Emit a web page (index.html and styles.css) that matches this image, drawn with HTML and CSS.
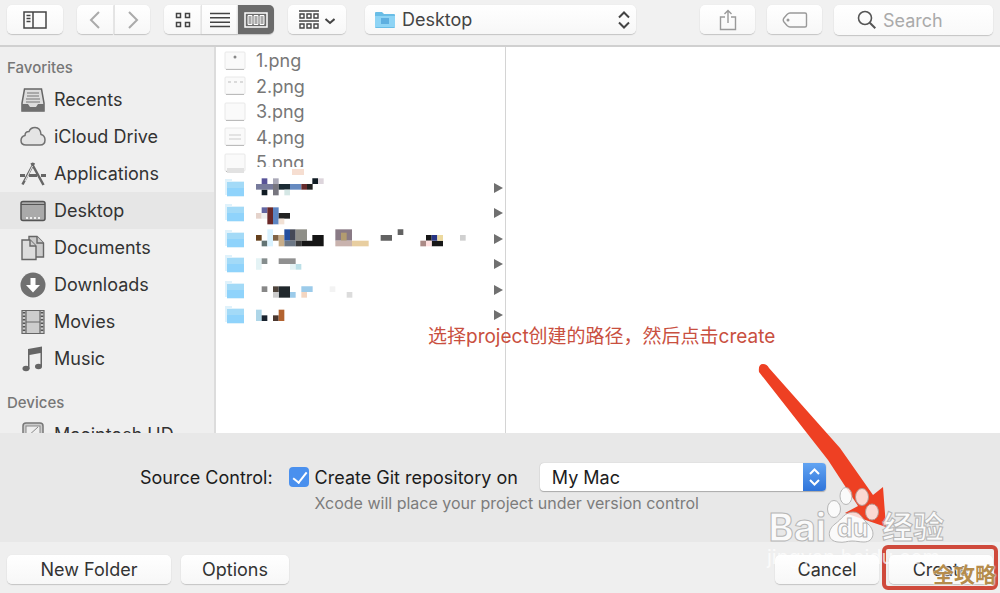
FILE: index.html
```html
<!DOCTYPE html>
<html lang="en">
<head>
  <meta charset="UTF-8" />
  <meta name="viewport" content="width=device-width, initial-scale=1.0"/>
  <title>Save Project</title>
  <link rel="stylesheet" href="styles.css">
</head>
<body>
  <div class="dialog">
    <header class="toolbar">
      <button class="btn w56" aria-label="Toggle sidebar">
        <svg width="24" height="18" viewBox="0 0 24 18" fill="none" stroke="#444" stroke-width="1.5"><path d="M1 1h22v16H1zM10 1v16M3.500 4.500h4M3.500 7.500h4M3.500 10.500h4"/></svg>
      </button>

      <div class="group nav">
        <button class="btn w36" aria-label="Back"><svg width="12" height="18" viewBox="0 0 12 18" fill="none" stroke="#aaa" stroke-width="2"><path d="M10 1L2 9l8 8"/></svg></button>
        <button class="btn w36" aria-label="Forward"><svg width="12" height="18" viewBox="0 0 12 18" fill="none" stroke="#aaa" stroke-width="2"><path d="M2 1l8 8-8 8"/></svg></button>
      </div>

      <div class="group">
        <button class="btn w37" aria-label="Icons"><svg width="16" height="16" viewBox="0 0 16 16" fill="none" stroke="#444" stroke-width="1.5"><path d="M1.500 1.500h4v4h-4zM10.500 1.500h4v4h-4zM1.500 10.500h4v4h-4zM10.500 10.500h4v4h-4z"/></svg></button>
        <button class="btn w36" aria-label="List"><svg width="20" height="16" viewBox="0 0 20 16" fill="none" stroke="#444" stroke-width="1.500"><path d="M0 1.500h20M0 5.800h20M0 10.200h20M0 14.500h20"/></svg></button>
        <button class="btn w37 active" aria-label="Columns"><svg width="24" height="16" viewBox="0 0 24 16" fill="none" stroke="#fff" stroke-width="1.500"><path d="M1 1h22v14H1z"/><path fill="#aaa" d="M4 3.500h4v9H4zM10 3.500h4v9h-4zM16 3.500h4v9h-4z" stroke-width="1"/></svg></button>
      </div>

      <button class="btn w58" aria-label="Group by">
        <svg width="36" height="20" viewBox="0 0 36 20" fill="none" stroke="#444" stroke-width="1.400"><path d="M0 1h20M0 11h20M1 4h4v4H1zM8 4h4v4H8zM15 4h4v4h-4zM1 14h4v4H1zM8 14h4v4H8zM15 14h4v4h-4z"/><path stroke-width="2" d="M26.500 9l4.500 4 4.500-4"/></svg>
      </button>

      <div class="location">
        <svg class="location-icon" width="22" height="18" viewBox="0 0 22 18"><path fill="#69bde6" d="M1 2q0-1 1-1h6l2 2h10q1 0 1 1v12q0 1-1 1H2q-1 0-1-1z"/><path fill="#8ed4f5" d="M1 5h20v11H1z"/><path fill="#5eafe0" d="M7 7h8v6H7z"/></svg>
        <select aria-label="Location"><option>Desktop</option></select>
        <svg class="location-arrows" width="12" height="18" viewBox="0 0 12 18" fill="none" stroke="#444" stroke-width="2"><path d="M1 6.500L6 1.500l5 5M1 11.500l5 5 5-5"/></svg>
      </div>

      <div class="toolbar-end">
        <button class="btn w55" aria-label="Share"><svg width="18" height="22" viewBox="0 0 18 22" fill="none" stroke="#999" stroke-width="1.400"><path d="M6 8H1.500v12.500h15V8H12M9 14V1.500M5.500 5L9 1.500 12.500 5"/></svg></button>
        <button class="btn w55" aria-label="Tags"><svg width="26" height="16" viewBox="0 0 26 16" fill="none" stroke="#999" stroke-width="1.400"><path d="M8 1h15q1.500 0 1.500 1.500v11q0 1.500-1.500 1.500H8q-1.500 0-3-1.500L2 10q-1.500-2 0-4l3-3.500Q6.500 1 8 1z"/><circle cx="6" cy="8" r=".8"/></svg></button>
        <div class="search">
          <svg width="20" height="20" viewBox="0 0 20 20" fill="none" stroke="#555" stroke-width="1.600"><circle cx="8" cy="8" r="6.500"/><path stroke-width="2" d="M12.800 12.800l5.500 5.500"/></svg>
          <input type="search" placeholder="Search" aria-label="Search">
        </div>
      </div>
    </header>

    <main class="browser">
      <nav class="sidebar">
        <h2>Favorites</h2>
        <a href="#"><svg viewBox="0 0 26 26"><path fill="#ddd" stroke="#666" stroke-width="1.500" d="M4.500 2h17L24 16v8H2v-8z"/><path stroke="#777" stroke-width="1.200" d="M7 6h12M7 9h12M6 12h14M6 15h14"/><path fill="#707070" d="M2 17h6l2 3h6l2-3h6v7H2z"/></svg>Recents</a>
        <a href="#"><svg viewBox="0 0 26 26"><path fill="#e4e4e4" stroke="#707070" stroke-width="1.500" d="M6 21q-5 0-5-4.500 0-4 4-5 0-4 4-4 1.500-4 6-4 5.500 0 6 7 4 1 4 5.500 0 5-5 5z"/></svg>iCloud Drive</a>
        <a href="#"><svg viewBox="0 0 26 26" fill="none" stroke="#666"><path stroke-width="2.500" d="M14 2L2.500 23.500M11.500 2l12 22"/><path stroke-width="3" d="M0 14.500h5M9 14.500h8M21 14.500h5"/><path stroke="#efefef" stroke-width="1" d="M12.500 5L5 20"/></svg>Applications</a>
        <a href="#" class="selected"><svg viewBox="0 0 26 26"><rect x="1" y="3.500" width="24" height="19" rx="2" fill="#aaa" stroke="#555" stroke-width="1.500"/><path stroke="#555" d="M1 6.500h24"/><path stroke="#eee" stroke-width="2" stroke-dasharray="2 2" d="M6 20h15"/></svg>Desktop</a>
        <a href="#"><svg viewBox="0 0 26 26" fill="#ccc" stroke="#666" stroke-width="1.400"><path d="M9 1.500h8l6.500 6.500v14H9z"/><path d="M17 1.500V8h6.500"/><path fill="#ddd" d="M2 5h8l6 6v13.500H2z"/><path d="M10 5v6h6"/></svg>Documents</a>
        <a href="#"><svg viewBox="0 0 26 26"><circle cx="13" cy="13" r="12.500" fill="#707070"/><path fill="#fff" d="M10.500 6h5v7H20l-7 7.500L6 13h4.500z"/></svg>Downloads</a>
        <a href="#"><svg viewBox="0 0 26 26"><path fill="#ccc" stroke="#666" stroke-width="1.200" d="M2 1.500h22v23H2zM6 1.500v23M20 1.500v23M6 13h14"/><path stroke="#555" stroke-width="2.500" stroke-dasharray="1.500 2" d="M4 3v21M22 3v21"/></svg>Movies</a>
        <a href="#"><svg viewBox="0 0 26 26"><g fill="#666"><path d="M8 3l14-2.500v20h-1.500V7L9.500 9v14H8z"/><ellipse cx="6" cy="22.500" rx="3.500" ry="2.800"/><ellipse cx="18.500" cy="20.500" rx="3.500" ry="2.800"/></g></svg>Music</a>
        <h2 class="devices">Devices</h2>
        <a href="#"><svg viewBox="0 0 26 26"><rect x="3" y="1" width="20" height="24" rx="3" fill="#ccc" stroke="#777" stroke-width="1.500"/><rect x="6" y="4" width="14" height="12" fill="#eee" stroke="#888"/><path stroke="#888" d="M7 15L18 5"/></svg>Macintosh HD</a>
      </nav>

      <ul class="files">
        <li><svg class="thumb" viewBox="0 0 22 22"><use href="#shot"/><circle cx="11" cy="7" r="1.500" fill="#888"/></svg><span>1.png</span></li>
        <li><svg class="thumb" viewBox="0 0 22 22"><use href="#shot"/><path stroke="#bbb" d="M4 7h3M10 7h3M16 7h3"/></svg><span>2.png</span></li>
        <li><svg class="thumb" viewBox="0 0 22 22"><use href="#shot"/></svg><span>3.png</span></li>
        <li><svg class="thumb" viewBox="0 0 22 22"><use href="#shot"/><path stroke="#ccc" d="M5 9h12M5 13h12"/></svg><span>4.png</span></li>
        <li><svg class="thumb" viewBox="0 0 22 22"><use href="#shot"/><path fill="#e2e2e2" d="M3 16h17v5H3z"/></svg><span class="cut">5.png</span>
          <svg class="smudge" width="12" height="6"><path fill="#f6ded1" d="M0 0h12v6H0z"/></svg></li>
        <li>
          <svg class="thumb" viewBox="0 0 22 22"><use href="#folder"/></svg>
          <svg class="mosaic" viewBox="0 0 690 75"><path fill="#777b9c" d="M0 27h51v17H0z"/><path fill="#585398" d="M17 10h17v17H17z"/><path fill="#111c24" d="M17 44h17v17H17zM169 10h17v17h-17z"/><path fill="#aaa9b8" d="M51 10h17v17H51z"/><path fill="#77767f" d="M51 27h17v34H51z"/><path fill="#1b2b35" d="M68 27h34v17H68z"/><path fill="#668ac0" d="M102 27h34v17h-34z"/><path fill="#662b2c" d="M136 27h17v17h-17z"/><path fill="#222" d="M153 27h17v17h-17z"/><path fill="#ddd5dc" d="M186 10h17v17h-17z"/><path fill="#d5e7e5" d="M85 44h17v17H85z"/></svg>
          <i class="more"></i>
        </li>
        <li>
          <svg class="thumb" viewBox="0 0 22 22"><use href="#folder"/></svg>
          <svg class="mosaic" viewBox="0 0 690 75"><path fill="#e5d3cb" d="M0 36h17v17H0z"/><path fill="#6265a0" d="M17 19h17v17H17z"/><path fill="#eee" d="M17 36h17v17H17z"/><path fill="#6a2828" d="M34 19h17v51H34z"/><path fill="#5d85c2" d="M51 19h17v51H51z"/><path fill="#222" d="M68 36h34v17H68z"/><path fill="#f1e1d5" d="M68 53h17v17H68z"/></svg>
          <i class="more"></i>
        </li>
        <li>
          <svg class="thumb" viewBox="0 0 22 22"><use href="#folder"/></svg>
          <svg class="mosaic" viewBox="0 0 690 75"><path fill="#65401c" d="M0 27h17v17H0z"/><path fill="#637474" d="M17 44h17v17H17z"/><path fill="#d9f2ff" d="M34 10h17v51H34z"/><path fill="#806346" d="M51 27h17v17H51z"/><path fill="#c8ad88" d="M68 27h17v34H68z"/><path fill="#234e9e" d="M85 10h17v34H85z"/><path fill="#464a57" d="M102 10h17v34h-17z"/><path fill="#8f8f88" d="M119 10h34v34h-34z"/><path fill="#6c7785" d="M85 44h34v17H85z"/><path fill="#3b3b3b" d="M119 44h17v17h-17z"/><path fill="#151515" d="M136 44h67v17h-67zM169 27h34v17h-34z"/><path fill="#897a85" d="M238 10h50v34h-50z"/><path fill="#b29c70" d="M255 20h17v24h-17z"/><path fill="#c9b3ae" d="M238 44h50v17h-50z"/><path fill="#e8cea0" d="M288 44h50v17h-50z"/><path fill="#626262" d="M374 27h34v17h-34zM425 10h17v17h-17z"/><path fill="#ab8a86" d="M493 44h17v17h-17z"/><path fill="#171717" d="M510 27h17v17h-17zM527 44h34v17h-34z"/><path fill="#273585" d="M527 27h17v17h-17z"/><path fill="#ecd99f" d="M544 27h17v17h-17z"/><path fill="#ffe0e0" d="M510 44h17v17h-17z"/><path fill="#d0d0d0" d="M612 27h17v17h-17z"/></svg>
          <i class="more"></i>
        </li>
        <li>
          <svg class="thumb" viewBox="0 0 22 22"><use href="#folder"/></svg>
          <svg class="mosaic" viewBox="0 0 690 75"><path fill="#e4f3f5" d="M0 19h17v34H0zM102 36h17v17h-17z"/><path fill="#858d8d" d="M17 19h17v17H17z"/><path fill="#909090" d="M68 19h51v17H68z"/><path fill="#bce0e8" d="M119 36h17v17h-17z"/></svg>
          <i class="more"></i>
        </li>
        <li>
          <svg class="thumb" viewBox="0 0 22 22"><use href="#folder"/></svg>
          <svg class="mosaic" viewBox="0 0 690 75"><path fill="#888" d="M17 28h17v17H17z"/><path fill="#4f443b" d="M51 28h17v17H51z"/><path fill="#20272b" d="M68 28h34v34H68z"/><path fill="#9ccbea" d="M102 45h17v17h-17zM136 28h34v17h-34z"/><path fill="#ccc" d="M51 45h17v17H51z"/><path fill="#f4d6c1" d="M136 45h17v17h-17z"/><path fill="#f3f3f3" d="M221 28h17v17h-17z"/><path fill="#dcdcdc" d="M272 45h17v17h-17z"/></svg>
          <i class="more"></i>
        </li>
        <li>
          <svg class="thumb" viewBox="0 0 22 22"><use href="#folder"/></svg>
          <svg class="mosaic" viewBox="0 0 690 75"><path fill="#aed6e8" d="M0 20h17v34H0z"/><path fill="#19222e" d="M17 37h17v17H17z"/><path fill="#4b3830" d="M51 37h17v17H51z"/><path fill="#b36330" d="M68 20h17v34H68z"/></svg>
          <i class="more"></i>
        </li>
      </ul>

      <section class="preview"></section>
    </main>

    <section class="accessory">
      <span class="title">Source Control:</span>
      <label class="check"><input type="checkbox" id="git" checked>Create Git repository on</label>
      <div class="host">
        <select aria-label="Repository location"><option>My Mac</option></select>
        <svg class="host-arrows" width="23" height="28" viewBox="0 0 23 28" fill="none" stroke="#fff" stroke-width="2"><path d="M7 11l4.500-4.500L16 11M7 17l4.500 4.500L16 17"/></svg>
      </div>
      <small class="hint">Xcode will place your project under version control</small>
    </section>

    <footer class="actions">
      <button class="btn w164">New Folder</button>
      <button class="btn w108">Options</button>
      <button class="btn w104 cancel">Cancel</button>
      <button class="btn w104">Create</button>
    </footer>

    <!-- annotations over the dialog -->
    <p class="note" lang="zh">选择project创建的路径，然后点击create</p>
    <svg class="pointer" width="130" height="170" viewBox="0 0 130 170"><path fill="#ee4023" d="M2 11Q1 3 6 3q4 0 6 4l71 80 33 47 10-8 3 40-41-14 13-7-30-46z"/></svg>
    <div class="frame"></div>
    <div class="baidu" lang="zh">
      <span>Bai</span>
      <svg width="56" height="58" viewBox="0 0 56 58" fill="#fff" stroke="#aaa" stroke-width="1"><ellipse cx="8" cy="22" rx="6.500" ry="8.500"/><ellipse cx="20" cy="9" rx="6" ry="8.500"/><ellipse cx="36" cy="10" rx="6.500" ry="8.500"/><ellipse cx="46" cy="25" rx="6.500" ry="8"/><path d="M27 25c8 0 9 7 15 12 8 7 6 18-4 18-5 0-7-1-12-1s-8 2-14 1C1 54 1 43 9 37c7-5 10-12 18-12z"/><text x="11" y="50" class="du">du</text></svg>
      <span class="jingyan">经验</span>
    </div>
    <div class="baidu-url">jingyan.baidu.com</div>
    <div class="corner" lang="zh">全攻略</div>
  </div>

  <svg width="0" height="0" class="defs">
    <symbol id="shot" viewBox="0 0 22 22"><rect x="1" y="2" width="20" height="17" rx="1" fill="#fafafa" stroke="#e8e8e8"/><path stroke="#bbb" d="M2 19.500h18"/></symbol>
    <symbol id="folder" viewBox="0 0 22 22"><path fill="#e0f2fb" d="M1 2h7v2h12v16H3v-2H1z"/><path fill="#8fd3fb" d="M3 5h17v14H3z"/><path fill="#a3daf7" d="M3 5h17v6H3z"/></symbol>
  </svg>
</body>
</html>
```
FILE: styles.css
```css
* {
  box-sizing: border-box;
}

body {
  margin: 0;
  font-family: Inter, "Noto Sans CJK SC", sans-serif;
  font-size: 18px;
  color: #333;
  background: #efefef;
}

button, input, select {
  font: inherit;
  color: inherit;
}

svg {
  flex: none;
}

.defs {
  position: absolute;
}

.dialog {
  position: relative;
  display: flex;
  flex-direction: column;
  height: 100vh;
  overflow: hidden;
}

/* buttons */
.btn {
  display: flex;
  align-items: center;
  justify-content: center;
  height: 29px;
  padding: 0;
  border: none;
  border-radius: 5px;
  background: linear-gradient(#fff, #f7f7f7);
  box-shadow: 0 1px 1px #c4c4c4, 0 0 1px #ddd;
}

.w36 { width: 36px; }
.w37 { width: 37px; }
.w55 { width: 55px; }
.w56 { width: 56px; }
.w58 { width: 58px; }
.w104 { width: 104px; }
.w108 { width: 108px; }
.w164 { width: 164px; }

/* toolbar */
.toolbar {
  display: flex;
  align-items: flex-start;
  gap: 14px;
  height: 47px;
  padding: 5px 7px;
  background: #f1f1f1;
  border-bottom: 2px solid #d0d0d0;
}

.group {
  display: flex;
}

.nav {
  gap: 1px;
}

.group .btn {
  border-radius: 0;
}

.group .btn + .btn {
  border-left: 1px solid #e4e4e4;
}

.group .btn:first-child {
  border-radius: 5px 0 0 5px;
}

.group .btn:last-child {
  border-radius: 0 5px 5px 0;
}

.group .active {
  background: #6b6b6b;
}

.location {
  position: relative;
  width: 271px;
  margin-left: 5px;
}

.location select {
  width: 100%;
  height: 29px;
  padding: 0 30px 0 37px;
  appearance: none;
  border: none;
  border-radius: 5px;
  background: linear-gradient(#fff, #f7f7f7);
  box-shadow: 0 1px 1px #c4c4c4, 0 0 1px #ddd;
  color: #444;
}

.location-icon {
  position: absolute;
  left: 9px;
  top: 6px;
}

.location-arrows {
  position: absolute;
  right: 6px;
  top: 6px;
  pointer-events: none;
}

.toolbar-end {
  display: flex;
  gap: 12px;
  margin-left: auto;
}

.search {
  display: flex;
  align-items: center;
  gap: 6px;
  width: 159px;
  height: 30px;
  padding-left: 23px;
  border-radius: 5px;
  background: linear-gradient(#fff, #f9f9f9);
  box-shadow: 0 1px 1px #c4c4c4, 0 0 1px #ddd;
}

.search input {
  width: 100px;
  padding: 0;
  border: none;
  outline: none;
  background: none;
}

.search input::placeholder {
  color: #aaa;
}

/* browser */
.browser {
  display: flex;
  flex: 1;
  min-height: 0;
  background: #fff;
}

.sidebar {
  width: 216px;
  padding-top: 8px;
  overflow: hidden;
  background: #efefef;
  border-right: 2px solid #dcdcdc;
}

.sidebar h2 {
  margin: 0;
  padding-left: 7px;
  font-size: 15px;
  font-weight: 500;
  line-height: 26px;
  color: #777;
}

.sidebar .devices {
  margin-top: 13px;
}

.sidebar a {
  display: flex;
  align-items: center;
  gap: 8px;
  height: 37px;
  padding-left: 20px;
  color: #333;
  text-decoration: none;
  white-space: nowrap;
}

.sidebar a svg {
  width: 26px;
  height: 26px;
}

.sidebar .selected {
  background: #e6e6e6;
}

.files {
  display: grid;
  grid-template-rows: repeat(11, 1fr);
  align-self: flex-start;
  width: 289px;
  height: 281px;
  margin: 0;
  padding: 1px 2px 0 8px;
  list-style: none;
  color: #777;
}

.files li {
  display: flex;
  align-items: center;
  line-height: 25px;
}

.thumb {
  width: 22px;
  height: 22px;
  margin-right: 10px;
}

.cut {
  align-self: flex-start;
  height: 17px;
  overflow: hidden;
}

.smudge {
  align-self: flex-end;
  margin-left: -12px;
}

.mosaic {
  width: 230px;
  height: 25px;
}

.more {
  margin-left: auto;
  border: solid transparent;
  border-width: 5px 0 5px 9px;
  border-left-color: #707070;
}

.preview {
  flex: 1;
  border-left: 1px solid #d4d4d4;
}

/* accessory view */
.accessory {
  display: grid;
  grid-template-columns: auto auto 286px;
  grid-template-rows: 30px 22px;
  align-items: center;
  justify-content: start;
  height: 109px;
  padding: 29px 0 0 14%;
  background: #e8e8e8;
  color: #1c1c1c;
}

.check {
  display: flex;
  align-items: center;
  gap: 6px;
  margin: 0 22px 0 16px;
}

.check input {
  appearance: none;
  width: 20px;
  height: 20px;
  margin: 0;
  border-radius: 4px;
  background: #4a90ee;
}

.check input:checked::before {
  content: "";
  display: block;
  width: 6px;
  height: 12px;
  margin: 2px 0 0 7px;
  border: solid #fff;
  border-width: 0 2px 2px 0;
  transform: rotate(38deg);
}

.host {
  position: relative;
}

.host select {
  display: block;
  width: 100%;
  height: 28px;
  padding: 0 30px 0 12px;
  appearance: none;
  border: none;
  border-radius: 4px;
  background: #fff;
  box-shadow: 0 1px 1px #aaa, 0 0 1px #aaa;
}

.host-arrows {
  position: absolute;
  right: 0;
  top: 0;
  border-radius: 0 4px 4px 0;
  background: linear-gradient(#62a4f2, #2f74da);
  pointer-events: none;
}

.hint {
  grid-column: 2 / 4;
  margin-left: 42px;
  font-size: 16px;
  color: #7c7c7c;
}

/* footer */
.actions {
  display: flex;
  gap: 10px;
  height: 51px;
  padding: 13px 7px 0;
  background: #efefef;
}

.cancel {
  margin-left: auto;
}

/* annotations */
.note {
  position: absolute;
  left: 428px;
  top: 324px;
  margin: 0;
  font-size: 19px;
  line-height: 26px;
  color: #c9503f;
  white-space: nowrap;
}

.pointer {
  position: absolute;
  right: 113px;
  bottom: 62px;
}

.frame {
  position: absolute;
  right: 2px;
  bottom: 3px;
  width: 116px;
  height: 45px;
  border: 4px solid #cf4a3c;
  border-radius: 6px;
}

.baidu {
  position: absolute;
  right: 56px;
  bottom: 48px;
  display: flex;
  align-items: flex-end;
  font-size: 38px;
  font-weight: 700;
  line-height: 36px;
  color: #fff;
  -webkit-text-stroke: 1px #aaa;
  opacity: 0.8;
}

.du {
  font-size: 25px;
  fill: #fff;
}

.jingyan {
  font-size: 31px;
}

.baidu-url {
  position: absolute;
  right: 60px;
  bottom: 24px;
  font-size: 20px;
  line-height: 24px;
  color: #fff;
  opacity: 0.7;
}

.corner {
  position: absolute;
  right: 4px;
  bottom: 5px;
  font-size: 21px;
  font-weight: 700;
  line-height: 26px;
  color: #b58c4c;
  text-shadow: 0 0 2px #fff, 0 0 2px #fff;
}
```
